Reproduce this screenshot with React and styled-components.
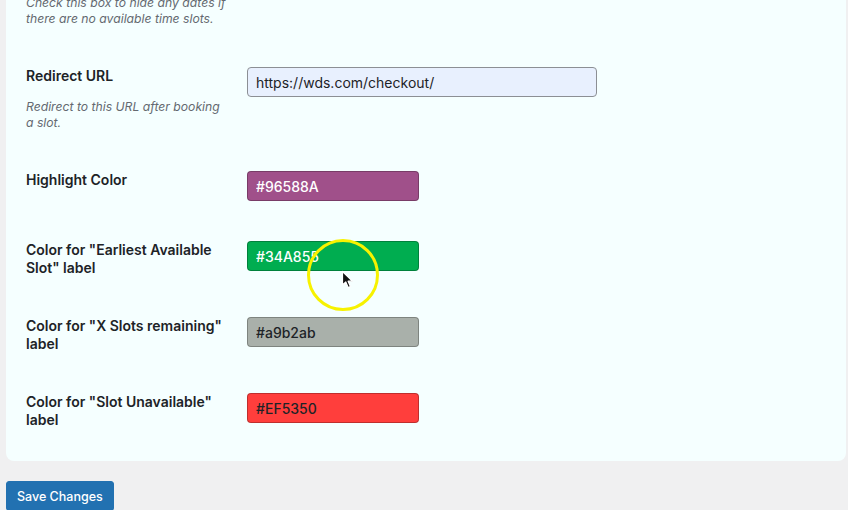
import React from 'react';
import styled, { createGlobalStyle } from 'styled-components';

const GlobalStyle = createGlobalStyle`
  html, body {
    margin: 0;
    padding: 0;
    background: #f0f0f1;
  }
  html {
    overflow: hidden;
  }
  body {
    font-family: Inter, "Noto Sans", "Liberation Sans", sans-serif;
    color: #1d2327;
  }
`;

const fields = [
  {
    label: 'Redirect URL',
    description: 'Redirect to this URL after booking a slot.',
    type: 'url',
    value: 'https://wds.com/checkout/',
  },
  { label: 'Highlight Color', type: 'color', value: '#96588A', bg: '#a0508a', light: true },
  { label: 'Color for "Earliest Available Slot" label', type: 'color', value: '#34A855', bg: '#00ad50', light: true },
  { label: 'Color for "X Slots remaining" label', type: 'color', value: '#a9b2ab', bg: '#a9b0aa' },
  { label: 'Color for "Slot Unavailable" label', type: 'color', value: '#EF5350', bg: '#ff3e3c' },
];

function App() {
  return (
    <>
      <GlobalStyle />
      <Page>
        <Card>
          <Row>
            <Label>
              <Title>Hide Unavailable Dates</Title>
              <Description>
                Check this box to hide any dates if there are no available time slots.
              </Description>
            </Label>
            <Field>
              <Checkbox type="checkbox" />
            </Field>
          </Row>
          {fields.map((f) => (
            <Row key={f.label}>
              <Label>
                <Title>{f.label}</Title>
                {f.description && <Description>{f.description}</Description>}
              </Label>
              <Field>
                {f.type === 'url' ? (
                  <TextInput defaultValue={f.value} />
                ) : (
                  <ColorInput defaultValue={f.value} $bg={f.bg} $light={f.light} />
                )}
              </Field>
            </Row>
          ))}
        </Card>
        <SaveButton>Save Changes</SaveButton>
        <Highlight>
          <svg width="76" height="76" viewBox="0 0 76 76">
            <circle cx="38" cy="38" r="34.5" fill="none" stroke="#f7f200" strokeWidth="3" />
          </svg>
          <Cursor width="14" height="20" viewBox="0 0 14 20">
            <path
              d="M1.5 1.5 L1.5 15 L4.8 12 L7.2 17.6 L9.4 16.6 L7.1 11.2 L11.6 11.2 Z"
              fill="#111"
              stroke="#fff"
              strokeWidth="1.2"
              strokeLinejoin="round"
            />
          </Cursor>
        </Highlight>
      </Page>
    </>
  );
}

const Page = styled.div`
  position: relative;
  display: flow-root;
  padding: 0 2px 0 6px;
`;

const Card = styled.div`
  margin-top: -57px;
  background: #f5ffff;
  border-radius: 8px;
  padding: 0 20px 12px;
  display: flex;
  flex-direction: column;
`;

const Row = styled.div`
  display: flex;
  align-items: flex-start;
  padding: 20px 0;
`;

const Label = styled.div`
  width: 200px;
  padding-right: 10px;
  flex-shrink: 0;
`;

const Title = styled.div`
  font-size: 14px;
  font-weight: 600;
  line-height: 18px;
  color: #1d2327;
`;

const Description = styled.div`
  margin-top: 14px;
  font-size: 12.2px;
  font-style: italic;
  line-height: 16px;
  color: #646970;
`;

const Field = styled.div`
  flex: 1;
  display: flex;
  padding-left: 11px;
`;

const inputBase = `
  box-sizing: border-box;
  height: 30px;
  border: 1px solid #8c8f94;
  border-radius: 4px;
  padding: 0 8px;
  font-family: Inter, "Noto Sans", "Liberation Sans", sans-serif;
  font-size: 14px;
  outline: none;
  margin: 0;
`;

const TextInput = styled.input`
  ${inputBase}
  width: 350px;
  background: #e8f0fe;
  color: #1d2327;
`;

const ColorInput = styled.input`
  ${inputBase}
  width: 172px;
  background: ${(p) => p.$bg};
  color: ${(p) => (p.$light ? '#ffffff' : '#1d2327')};
  font-weight: 500;
  border-color: rgba(0, 0, 0, 0.25);
`;

const Checkbox = styled.input`
  margin: 0;
  width: 16px;
  height: 16px;
`;

const SaveButton = styled.button`
  display: block;
  margin-top: 20px;
  height: 30px;
  padding: 0 10px;
  background: #2271b1;
  color: #fff;
  border: 1px solid #2271b1;
  border-radius: 3px;
  font-family: Inter, "Noto Sans", "Liberation Sans", sans-serif;
  font-size: 12.5px;
  font-weight: 500;
  cursor: pointer;
`;

const Highlight = styled.div`
  position: absolute;
  left: 305px;
  top: 237px;
  width: 76px;
  height: 76px;
  pointer-events: none;
`;

const Cursor = styled.svg`
  position: absolute;
  left: 36px;
  top: 33px;
`;

export default App;
